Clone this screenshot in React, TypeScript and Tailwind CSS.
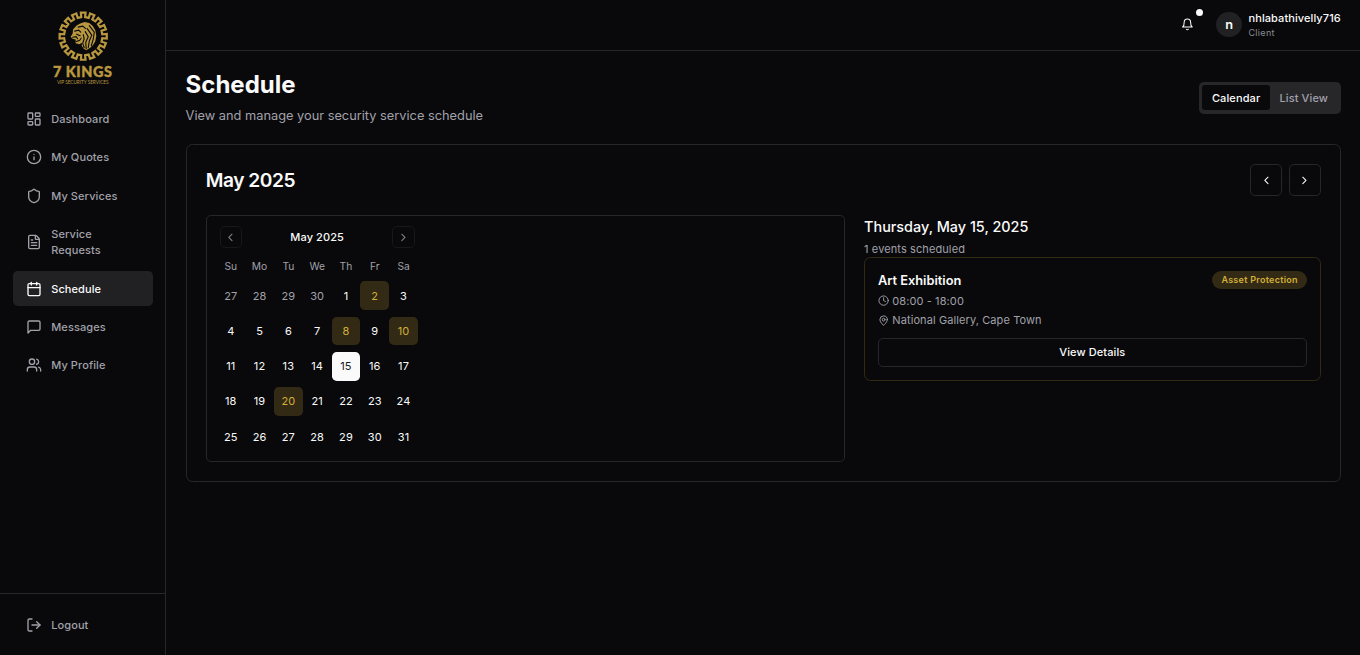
import React from "react";
import {
  Calendar,
  ChevronLeft,
  ChevronRight,
  Clock,
  FileText,
  Info,
  LayoutDashboard,
  LogOut,
  Shield,
  Users,
} from "lucide-react";

type IconProps = { className?: string };

function StrokeIcon({ className, children }: IconProps & { children: React.ReactNode }) {
  return (
    <svg
      viewBox="0 0 24 24"
      fill="none"
      stroke="currentColor"
      strokeWidth="2"
      strokeLinecap="round"
      strokeLinejoin="round"
      className={className}
    >
      {children}
    </svg>
  );
}

function MessageIcon({ className }: IconProps) {
  return (
    <StrokeIcon className={className}>
      <path d="M21 15a2 2 0 0 1-2 2H7l-4 4V5a2 2 0 0 1 2-2h14a2 2 0 0 1 2 2z" />
    </StrokeIcon>
  );
}

function BellIcon({ className }: IconProps) {
  return (
    <StrokeIcon className={className}>
      <path d="M6 8a6 6 0 0 1 12 0c0 7 3 9 3 9H3s3-2 3-9" />
      <path d="M10.3 21a1.94 1.94 0 0 0 3.4 0" />
    </StrokeIcon>
  );
}

function PinIcon({ className }: IconProps) {
  return (
    <StrokeIcon className={className}>
      <path d="M20 10c0 6-8 12-8 12s-8-6-8-12a8 8 0 0 1 16 0Z" />
      <circle cx="12" cy="10" r="3" />
    </StrokeIcon>
  );
}

// Square wave wrapped round a circle: the crown-like ring of the logo.
function ringPath(teeth: number, inner: number, outer: number) {
  const at = (r: number, a: number) =>
    `${(50 + r * Math.cos(a)).toFixed(2)} ${(50 + r * Math.sin(a)).toFixed(2)}`;
  const step = (Math.PI * 2) / teeth;
  const points: string[] = [];
  for (let i = 0; i < teeth; i++) {
    const c = i * step - Math.PI / 2;
    points.push(
      at(inner, c - step * 0.26),
      at(outer, c - step * 0.25),
      at(outer, c + step * 0.25),
      at(inner, c + step * 0.26),
    );
  }
  return `M${points.join("L")}Z`;
}

function Logo() {
  return (
    <div className="flex flex-col items-center text-[#b8973f]">
      <svg viewBox="0 0 100 100" className="h-[63px] w-[63px]" fill="none" stroke="currentColor">
        <path d={ringPath(16, 38, 47)} strokeWidth="4.400" />
        <path
          fill="currentColor"
          stroke="none"
          d="M30 36L37 29L44 25L53 22L62 24L69 30L74 38L76 49L74 60L70 67L64 73L56 78L51 75L47 69L48 63L42 66L35 64L34 60L36 57L29 55L25 51L29 45Z"
        />
        <g stroke="#09090b" strokeWidth="2.200" strokeLinecap="round">
          <path d="M33 40L41 38L45 42M29 52L36 51L39 55M35 61L43 58L46 54M37 46L44 49" />
          <path d="M50 47L52 55L49 64L52 73" />
          <path d="M54 41L60 51L55 62L56 75" />
          <path d="M58 35L67 48L62 60L60 73" />
          <path d="M62 29L72 42L70 56L66 69" />
          <path d="M40 32L49 30L55 35" />
        </g>
      </svg>
      <div className="mt-[3px] font-['Lato'] text-[18px] leading-[20px] font-black tracking-[0.700px] whitespace-nowrap [-webkit-text-stroke:0.500px_#b8973f]">
        7 KINGS
      </div>
      <div className="-mt-px font-['Lato'] text-[6px] leading-[8px] tracking-[-0.100px] whitespace-nowrap">
        VIP SECURITY SERVICES
      </div>
    </div>
  );
}

const NAV = [
  { label: "Dashboard", icon: LayoutDashboard },
  { label: "My Quotes", icon: Info },
  { label: "My Services", icon: Shield },
  { label: "Service Requests", icon: FileText },
  { label: "Schedule", icon: Calendar, active: true },
  { label: "Messages", icon: MessageIcon },
  { label: "My Profile", icon: Users },
];

function Sidebar() {
  return (
    <aside className="flex w-52 shrink-0 flex-col border-r border-[#27272a]">
      <div className="flex h-[110.750px] justify-center pt-[14px]">
        <Logo />
      </div>
      <nav className="flex flex-1 flex-col gap-1 px-4 pt-4 text-[13.750px] leading-5 font-medium tracking-[0.009em]">
        {NAV.map(({ label, icon: Icon, active }) => (
          <a
            key={label}
            className={
              active
                ? "flex items-center rounded-md bg-[#212123] px-4 pt-[12.500px] pb-[11.500px] text-[#fafafa]"
                : "flex items-center rounded-md px-4 py-3 text-[#a1a1aa]"
            }
          >
            <Icon className="mr-3 h-5 w-5 shrink-0" />
            <span>{label}</span>
          </a>
        ))}
      </nav>
      <div className="border-t border-[#27272a] p-4">
        <a className="flex items-center px-4 py-3 text-[13.750px] leading-5 font-medium tracking-[0.009em] text-[#a1a1aa]">
          <LogOut className="mr-3 h-5 w-5 shrink-0" />
          <span>Logout</span>
        </a>
      </div>
    </aside>
  );
}

function Header() {
  return (
    <header className="flex h-16 shrink-0 items-center justify-end gap-4 border-b border-[#27272a] px-6 pb-px">
      <button className="relative flex h-10 w-10 items-center justify-center">
        <BellIcon className="h-4 w-4" />
        <span className="absolute top-0 right-px h-[8.750px] w-[8.750px] rounded-full bg-[#fafafa]" />
      </button>
      <div className="flex items-center gap-2">
        <div className="flex h-8 w-8 items-center justify-center rounded-full bg-[#212123] font-semibold">
          n
        </div>
        <div>
          <p className="text-[13.750px] leading-5 font-medium tracking-[0.008em]">nhlabathivelly716</p>
          <p className="-mb-px pt-px text-[11.250px] leading-4 tracking-[0.035em] text-[#8b8b93]">
            Client
          </p>
        </div>
      </div>
    </header>
  );
}

const WEEKDAYS = ["Su", "Mo", "Tu", "We", "Th", "Fr", "Sa"];
const FIRST = [27, 28, 29, 30, 1, 2, 3];
const WEEKS = [FIRST, ...[4, 11, 18, 25].map((s) => FIRST.map((_, i) => s + i))];
const BOOKED = [2, 8, 10, 20];
const SELECTED = 15;

function dayClass(day: number, outside: boolean) {
  if (outside) return "flex h-9 w-9 items-center justify-center text-[#a1a1aa]";
  if (day === SELECTED)
    return "flex h-9 w-9 items-center justify-center rounded-md bg-[#fafafa] text-[#18181b]";
  if (BOOKED.includes(day))
    return "flex h-9 w-9 items-center justify-center rounded-md bg-[#322a14] text-[#d4af37]";
  return "flex h-9 w-9 items-center justify-center";
}

function MonthCalendar() {
  return (
    <div className="rounded-md border border-[#27272a] p-3 pb-[12.500px]">
      <div className="w-[252px]">
        <div className="relative flex justify-center pt-1">
          <span className="text-[13.750px] leading-5 font-medium tracking-[0.009em]">May 2025</span>
          <button className="absolute top-0 left-1 flex h-7 w-7 items-center justify-center rounded-md border border-[#27272a] opacity-50">
            <ChevronLeft className="h-4 w-4" />
          </button>
          <button className="absolute top-0 right-1 flex h-7 w-7 items-center justify-center rounded-md border border-[#27272a] opacity-50">
            <ChevronRight className="h-4 w-4" />
          </button>
        </div>
        <div className="mt-4 flex h-[21.500px] items-start text-[12.800px] leading-[21px] text-[#a1a1aa]">
          {WEEKDAYS.map((d) => (
            <span key={d} className="w-9 text-center">
              {d}
            </span>
          ))}
        </div>
        {WEEKS.map((week, w) => (
          <div key={w} className="mt-2 flex text-[13.750px] leading-5 tracking-[0.009em]">
            {week.map((day) => (
              <button key={day} className={dayClass(day, w === 0 && day > 20)}>
                {day}
              </button>
            ))}
          </div>
        ))}
      </div>
    </div>
  );
}

function DayEvents() {
  return (
    <div>
      <h3 className="pt-px text-lg leading-7 font-medium">Thursday, May 15, 2025</h3>
      <p className="mt-[3px] text-[13.750px] leading-5 tracking-[0.009em] text-[#a1a1aa]">
        1 events scheduled
      </p>
      <div className="rounded-lg border border-[#322a14] p-4 pb-[17px]">
        <div className="flex h-6 items-start justify-between">
          <h4 className="font-semibold">Art Exhibition</h4>
          <span className="rounded-full border border-transparent bg-[#322a14] px-2.5 pt-[3px] pb-px text-[11.250px] leading-4 font-semibold tracking-[0.031em] text-[#d4af37]">
            Asset Protection
          </span>
        </div>
        <div className="mt-1 flex items-center text-[13.750px] leading-5 tracking-[0.009em] text-[#a1a1aa]">
          <Clock className="mr-1 h-3.5 w-3.5" />
          08:00 - 18:00
        </div>
        <div className="mt-1 flex items-center text-[13.750px] leading-5 tracking-[0.009em] text-[#a1a1aa]">
          <PinIcon className="mr-1 h-3.5 w-3.5" />
          National Gallery, Cape Town
        </div>
        <button className="mt-3 h-9 w-full rounded-md border border-[#27272a] text-[13.750px] leading-5 font-medium tracking-[0.009em]">
          View Details
        </button>
      </div>
    </div>
  );
}

export default function App() {
  return (
    <div className="flex h-[819px] w-[1700px] overflow-hidden bg-[#09090b] font-['Inter',sans-serif] text-[#fafafa] [zoom:0.8]">
      <Sidebar />
      <div className="flex min-w-0 flex-1 flex-col">
        <Header />
        <main className="flex flex-col gap-6 p-6">
          <div className="flex items-center justify-between">
            <div>
              <h1 className="pt-px text-3xl font-bold">Schedule</h1>
              <p className="mt-[7px] text-[#a1a1aa]">View and manage your security service schedule</p>
            </div>
            <div className="flex h-10 items-center rounded-md bg-[#27272a] p-1 text-[13.750px] leading-5 font-medium tracking-[0.010em] text-[#a1a1aa]">
              <button className="rounded-sm bg-[#09090b] px-3 py-1.5 text-[#fafafa]">Calendar</button>
              <button className="rounded-sm px-3 py-1.5">List View</button>
            </div>
          </div>
          <section className="rounded-lg border border-[#27272a] p-6">
            <div className="mb-6 flex items-center justify-between">
              <h2 className="pt-0.5 text-2xl font-semibold tracking-tight">May 2025</h2>
              <div className="flex gap-2">
                <button className="flex h-10 w-10 items-center justify-center rounded-md border border-[#27272a]">
                  <ChevronLeft className="h-4 w-4" />
                </button>
                <button className="flex h-10 w-10 items-center justify-center rounded-md border border-[#27272a]">
                  <ChevronRight className="h-4 w-4" />
                </button>
              </div>
            </div>
            <div className="grid grid-cols-[7fr_5fr] gap-6">
              <MonthCalendar />
              <DayEvents />
            </div>
          </section>
        </main>
      </div>
    </div>
  );
}
